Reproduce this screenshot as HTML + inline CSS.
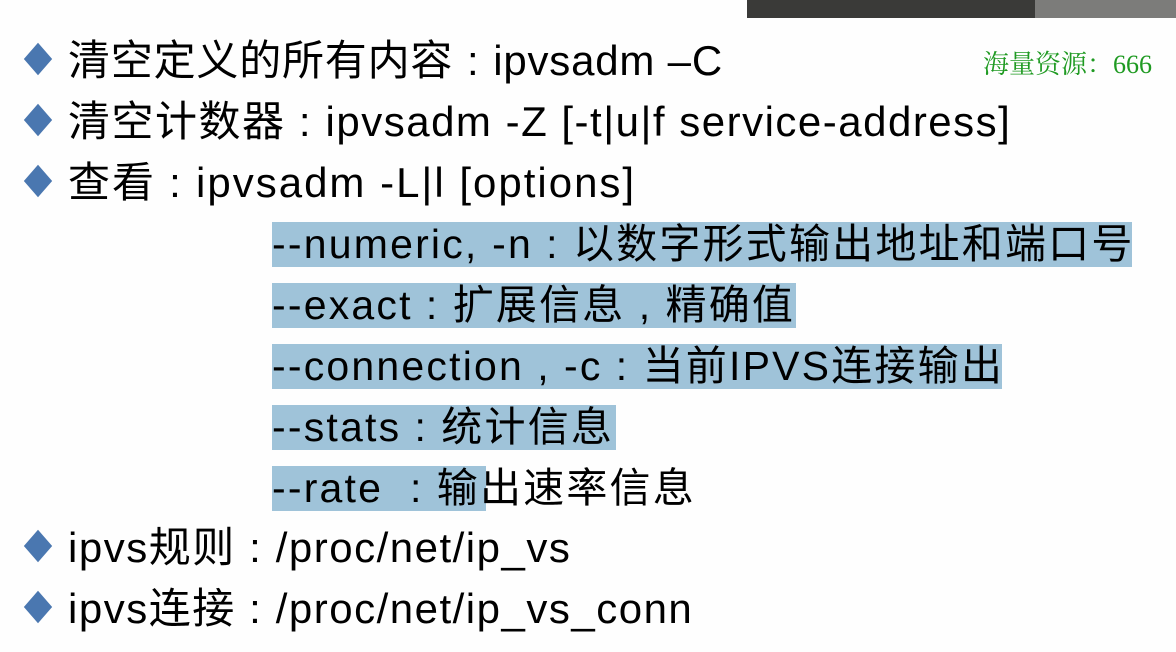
<!DOCTYPE html>
<html><head><meta charset="utf-8"><style>
body{margin:0;width:1176px;height:652px;background:#fefefe;overflow:hidden;position:relative;font-family:"Liberation Sans","Noto Sans CJK SC",sans-serif;color:#000}
.l{position:absolute;left:68px;height:61px;line-height:61px;font-size:42px;letter-spacing:1.5px;white-space:nowrap}
.d{position:absolute;left:24px;width:28px;height:32px;}
.d:before{content:"";position:absolute;left:4px;top:6px;width:20px;height:20px;background:#4a77b0;transform:scaleY(1.15) rotate(45deg)}
.h{position:absolute;left:272px;height:45px;background:#9fc3d9}
.s{position:absolute;left:272px;height:61px;line-height:61px;font-size:41px;letter-spacing:2.2px;white-space:nowrap}
i{font-style:normal;display:inline-block;width:40px;text-align:center}
</style></head><body>
<div style="position:absolute;left:747px;top:0;width:288px;height:18px;background:#3a3a38"></div>
<div style="position:absolute;left:1035px;top:0;width:141px;height:18px;background:#7c7c7a"></div>
<div style="position:absolute;left:983px;top:44px;font-family:'Liberation Serif','Noto Serif CJK SC',serif;font-size:26px;color:#1f9a22;white-space:nowrap">海量资源：666</div>

<div class="d" style="top:43px"></div><div class="l" style="top:30px;letter-spacing:0.8px">清空定义的所有内容<i>:</i>ipvsadm –C</div>
<div class="d" style="top:104px"></div><div class="l" style="top:91px">清空计数器<i>:</i>ipvsadm -Z [-t|u|f service-address]</div>
<div class="d" style="top:165px"></div><div class="l" style="top:152px;letter-spacing:2px">查看<i>:</i>ipvsadm -L|l [options]</div>

<div class="h" style="top:222px;width:860px"></div>
<div class="h" style="top:283px;width:524px"></div>
<div class="h" style="top:344px;width:730px"></div>
<div class="h" style="top:405px;width:344px"></div>
<div class="h" style="top:466px;width:214px"></div>
<div class="s" style="top:214px">--numeric, -n<i>:</i>以数字形式输出地址和端口号</div>
<div class="s" style="top:275px">--exact<i>:</i>扩展信息<i>,</i>精确值</div>
<div class="s" style="top:336px">--connection<i>,</i>-c<i>:</i>当前IPVS连接输出</div>
<div class="s" style="top:397px">--stats<i>:</i>统计信息</div>
<div class="s" style="top:458px">--rate <i>:</i>输出速率信息</div>

<div class="d" style="top:530px"></div><div class="l" style="top:517px">ipvs规则<i>:</i>/proc/net/ip_vs</div>
<div class="d" style="top:591px"></div><div class="l" style="top:578px">ipvs连接<i>:</i>/proc/net/ip_vs_conn</div>
</body></html>
